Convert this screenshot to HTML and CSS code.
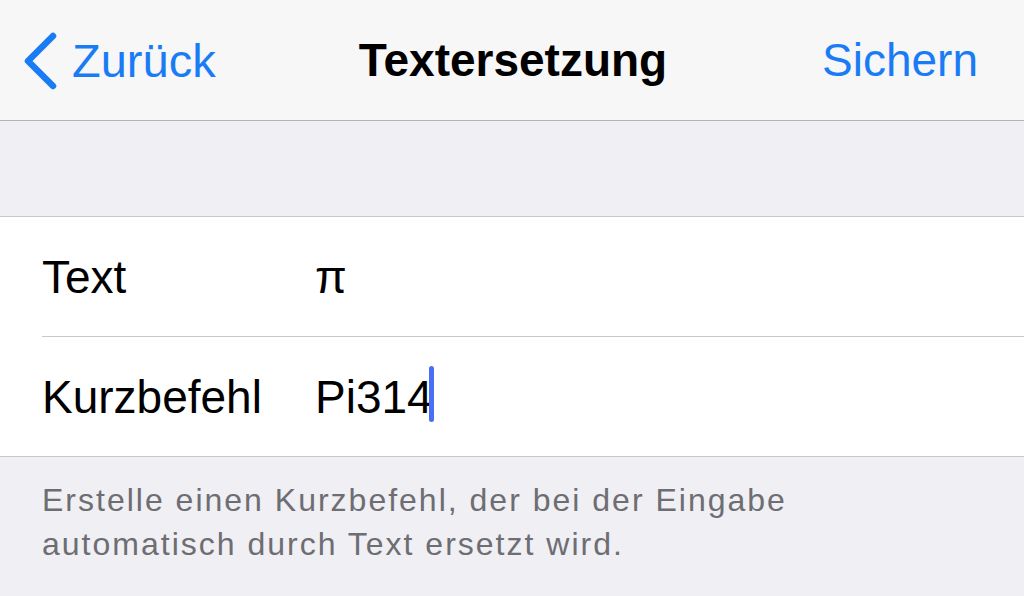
FILE: index.html
```html
<!DOCTYPE html>
<html lang="de">
<head>
<meta charset="utf-8">
<title>Textersetzung</title>
<link rel="stylesheet" href="styles.css">
</head>
<body>
<div class="screen">
  <header class="navbar">
    <div class="nav-back">
      <svg class="chevron" width="40" height="62" viewBox="0 0 40 62" aria-hidden="true">
        <path d="M31 6 L6 31 L31 56" fill="none" stroke="#1a7cf5" stroke-width="6.5" stroke-linecap="round" stroke-linejoin="round"/>
      </svg>
      <span class="nav-link back-text">Zurück</span>
    </div>
    <div class="nav-title">Textersetzung</div>
    <div class="nav-action nav-link">Sichern</div>
  </header>
  <div class="spacer"></div>
  <section class="group">
    <div class="row">
      <span class="label">Text</span>
      <span class="value">π</span>
    </div>
    <div class="row">
      <span class="label">Kurzbefehl</span>
      <span class="value">Pi314<span class="cursor"></span></span>
    </div>
  </section>
  <p class="footer">Erstelle einen Kurzbefehl, der bei der Eingabe<br>automatisch durch Text ersetzt wird.</p>
</div>
</body>
</html>
```
FILE: styles.css
```css
html, body {
  margin: 0;
  padding: 0;
}
body {
  width: 1024px;
  height: 596px;
  overflow: hidden;
  background: #efeff4;
  font-family: "Liberation Sans", Arial, sans-serif;
}
.screen {
  display: flex;
  flex-direction: column;
}
.navbar {
  height: 121px;
  box-sizing: border-box;
  background: #f7f7f8;
  border-bottom: 1px solid #b4b4b8;
  display: flex;
  align-items: center;
  justify-content: space-between;
  padding: 0 46px 0 22px;
  font-size: 46px;
}
.nav-back {
  display: flex;
  align-items: center;
  gap: 10px;
  width: 300px;
}
.chevron {
  display: block;
  margin-top: 1px;
}
.back-text {
  font-size: 47px;
}
.nav-link {
  color: #1a7cf5;
}
.nav-title {
  font-weight: bold;
  color: #000;
  margin-left: 26px;
}
.nav-action {
  width: 300px;
  text-align: right;
}
.spacer {
  height: 95px;
  border-bottom: 1px solid #c8c7cc;
}
.group {
  background: #fff;
  border-bottom: 1px solid #c8c7cc;
  padding-left: 42px;
}
.row {
  height: 119px;
  display: flex;
  align-items: center;
  font-size: 46px;
  color: #000;
  padding-top: 1px;
  box-sizing: border-box;
}
.row + .row {
  border-top: 1px solid #c8c7cc;
  height: 120px;
}
.label {
  width: 273px;
}
.value {
  display: flex;
  align-items: center;
}
.cursor {
  display: inline-block;
  width: 5px;
  height: 56px;
  border-radius: 2.5px;
  background: #4b6ef5;
  margin-left: -4px;
  margin-top: -6px;
}
.footer {
  margin: 0;
  padding: 21px 0 0 42px;
  color: #6d6d72;
  font-size: 32px;
  letter-spacing: 2px;
  line-height: 44px;
}
```
